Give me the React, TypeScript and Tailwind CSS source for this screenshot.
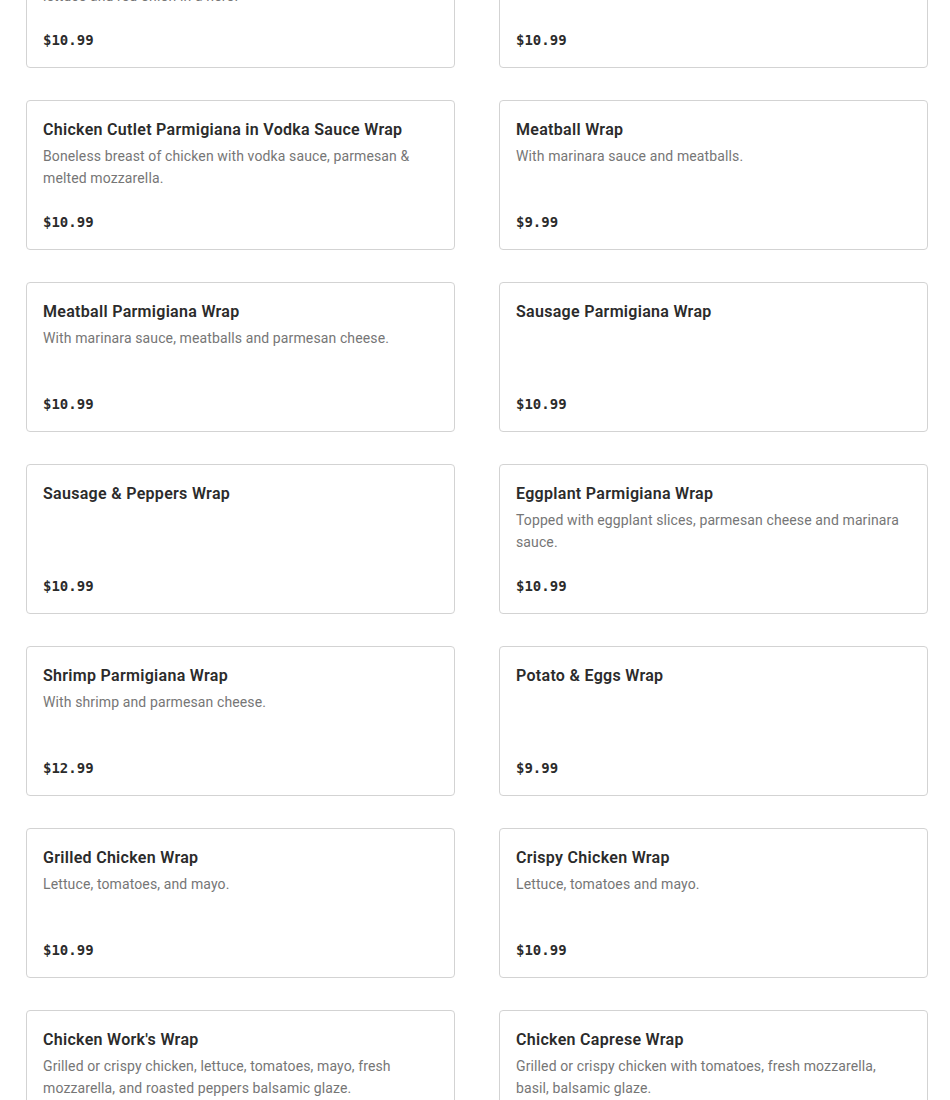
type Item = { name: string; description?: string; price: string };

const items: Item[] = [
  {
    name: "Chicken Cutlet Wrap",
    description: "Breaded chicken cutlet with fresh mozzarella, tomatoes, lettuce and red onion in a hero.",
    price: "$10.99",
  },
  { name: "Chicken Parmigiana Wrap", description: "With marinara sauce and mozzarella.", price: "$10.99" },
  {
    name: "Chicken Cutlet Parmigiana in Vodka Sauce Wrap",
    description: "Boneless breast of chicken with vodka sauce, parmesan & melted mozzarella.",
    price: "$10.99",
  },
  { name: "Meatball Wrap", description: "With marinara sauce and meatballs.", price: "$9.99" },
  {
    name: "Meatball Parmigiana Wrap",
    description: "With marinara sauce, meatballs and parmesan cheese.",
    price: "$10.99",
  },
  { name: "Sausage Parmigiana Wrap", price: "$10.99" },
  { name: "Sausage & Peppers Wrap", price: "$10.99" },
  {
    name: "Eggplant Parmigiana Wrap",
    description: "Topped with eggplant slices, parmesan cheese and marinara sauce.",
    price: "$10.99",
  },
  { name: "Shrimp Parmigiana Wrap", description: "With shrimp and parmesan cheese.", price: "$12.99" },
  { name: "Potato & Eggs Wrap", price: "$9.99" },
  { name: "Grilled Chicken Wrap", description: "Lettuce, tomatoes, and mayo.", price: "$10.99" },
  { name: "Crispy Chicken Wrap", description: "Lettuce, tomatoes and mayo.", price: "$10.99" },
  {
    name: "Chicken Work's Wrap",
    description: "Grilled or crispy chicken, lettuce, tomatoes, mayo, fresh mozzarella, and roasted peppers balsamic glaze.",
    price: "$10.99",
  },
  {
    name: "Chicken Caprese Wrap",
    description: "Grilled or crispy chicken with tomatoes, fresh mozzarella, basil, balsamic glaze.",
    price: "$10.99",
  },
];

function MenuCard({ item }: { item: Item }) {
  return (
    <div className="flex h-[150px] flex-col rounded-[4px] border border-[#d3d3d3] bg-white px-4 pt-[17px] pb-[17px]">
      <h3 className="text-[16px] leading-6 font-semibold tracking-[0.3px] text-[#2b2b2b]">{item.name}</h3>
      {item.description && (
        <p className="mt-[3px] text-[14px] leading-[22px] tracking-[0.12px] text-[#767676]">{item.description}</p>
      )}
      <div className="mt-auto font-['DejaVu_Sans_Mono',monospace] text-[14px] leading-5 font-bold text-[#2b2b2b]">
        {item.price}
      </div>
    </div>
  );
}

export default function App() {
  return (
    <div className="h-[1100px] overflow-hidden bg-white font-['Roboto',sans-serif]">
      <div className="mt-[-82px] grid grid-cols-2 gap-x-[44px] gap-y-[32px] pl-[26px] pr-[22px]">
        {items.map((item) => (
          <MenuCard key={item.name} item={item} />
        ))}
      </div>
    </div>
  );
}
